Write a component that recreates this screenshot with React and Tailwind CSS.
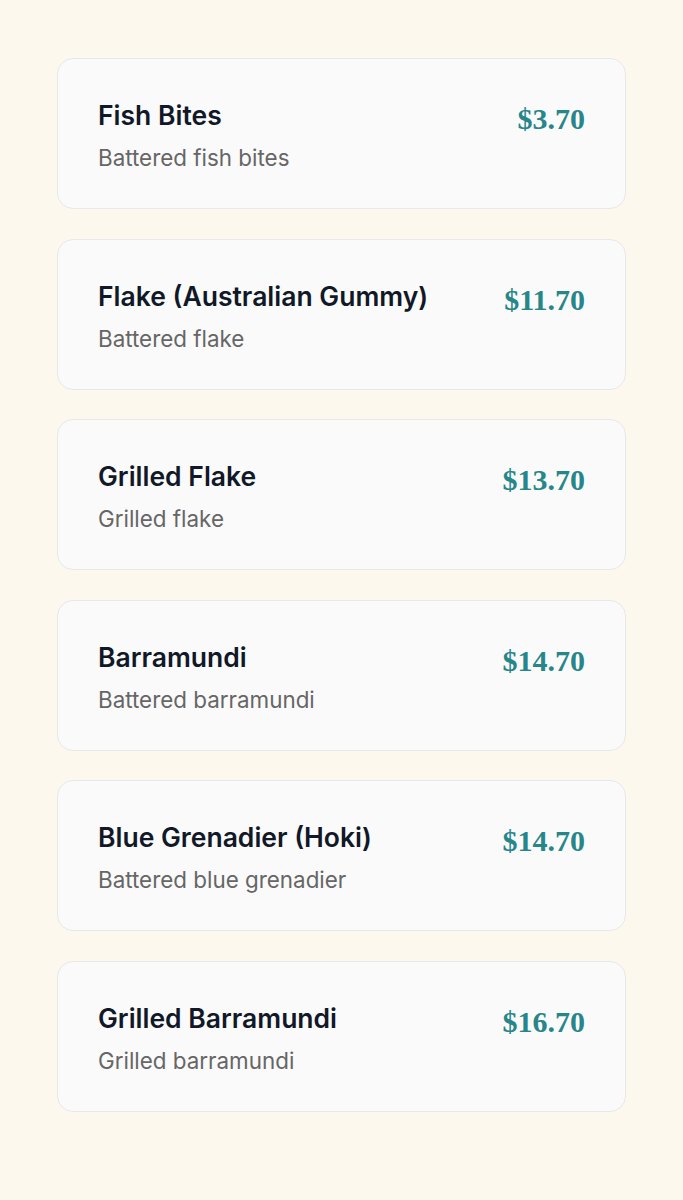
const items = [
  { name: 'Fish Bites', desc: 'Battered fish bites', price: '$3.70' },
  { name: 'Flake (Australian Gummy)', desc: 'Battered flake', price: '$11.70' },
  { name: 'Grilled Flake', desc: 'Grilled flake', price: '$13.70' },
  { name: 'Barramundi', desc: 'Battered barramundi', price: '$14.70' },
  { name: 'Blue Grenadier (Hoki)', desc: 'Battered blue grenadier', price: '$14.70' },
  { name: 'Grilled Barramundi', desc: 'Grilled barramundi', price: '$16.70' },
];

export default function App() {
  return (
    <div className="min-h-[1200px] bg-[#fdf8ee] px-[57px] pt-[58px] pb-[89px] font-['Inter',sans-serif]">
      <div className="flex flex-col gap-[29.6px]">
        {items.map((item) => (
          <div
            key={item.name}
            className="flex items-start justify-between rounded-2xl border border-[#e8e8ea] bg-[#fafafa] pl-10 pr-10 pt-10 pb-9"
          >
            <div>
              <h3 className="text-[26.5px] leading-8 font-semibold text-[#111827]">{item.name}</h3>
              <p className="mt-[13px] text-[22.4px] leading-7 text-[#666666]">{item.desc}</p>
            </div>
            <div className="pt-[2px] font-['Liberation_Serif',serif] text-[30px] leading-9 font-bold text-[#27868a]">
              {item.price}
            </div>
          </div>
        ))}
      </div>
    </div>
  );
}
